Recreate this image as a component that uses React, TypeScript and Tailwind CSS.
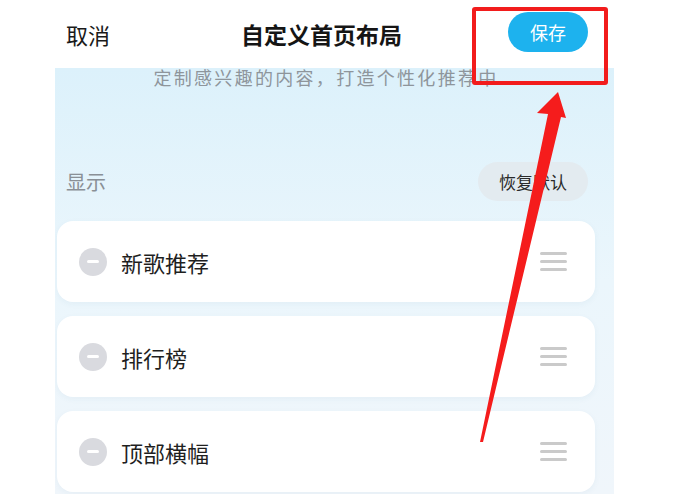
const items = ["新歌推荐", "排行榜", "顶部横幅"];

function DragHandle() {
  return (
    <div className="ml-auto mr-[28px] flex w-[27px] flex-col gap-[5px]">
      <span className="h-[3px] w-full rounded-full bg-[#cacaca]" />
      <span className="h-[3px] w-full rounded-full bg-[#cacaca]" />
      <span className="h-[3px] w-full rounded-full bg-[#cacaca]" />
    </div>
  );
}

function ItemCard({ label }: { label: string }) {
  return (
    <div className="flex h-[81px] items-center rounded-[16px] bg-white shadow-[0_2px_6px_rgba(40,90,140,0.05)]">
      <div className="ml-[22px] flex h-[28px] w-[28px] items-center justify-center rounded-full bg-[#d9dadf]">
        <span className="h-[3px] w-[12px] rounded-full bg-white" />
      </div>
      <span className="ml-[14px] text-[22px] leading-none text-[#1f1f1f]">{label}</span>
      <DragHandle />
    </div>
  );
}

export default function App() {
  return (
    <div
      className="relative flex h-[494px] w-[691px] overflow-hidden bg-white"
      style={{ fontFamily: '"Noto Sans CJK SC", "Noto Sans", sans-serif' }}
    >
      {/* 手机屏幕 */}
      <div className="ml-[55px] flex h-full w-[559px] flex-col">
        {/* 顶部导航 */}
        <header className="flex h-[68px] shrink-0 items-center bg-white">
          <span className="ml-[11px] text-[22px] leading-none text-[#1a1a1a]">取消</span>
          <span className="ml-[131px] text-[23px] font-bold leading-none text-[#151515]">自定义首页布局</span>
          <button className="ml-auto mr-[26px] mt-[-4px] flex h-[40px] w-[80px] items-center justify-center rounded-full bg-[#1db2ee] text-[18px] text-white">
            保存
          </button>
        </header>

        {/* 内容区 */}
        <main className="flex-1 overflow-hidden bg-gradient-to-b from-[#dcf1fb] via-[#ebf6fc] to-[#f0f6fb] pl-[2px] pr-[19px]">
          <p className="mt-[-3px] h-[24px] text-center text-[18px] leading-[24px] tracking-[2.3px] text-[#8e959b]">
            定制感兴趣的内容，打造个性化推荐中
          </p>

          <div className="mt-[73px] flex h-[39px] items-center justify-between pl-[9px] pr-[7px]">
            <span className="text-[20px] leading-none text-[#8a9096]">显示</span>
            <button className="flex h-[39px] w-[110px] items-center justify-center rounded-full bg-[#e3ebf0] text-[17px] text-[#2a2a2a]">
              恢复默认
            </button>
          </div>

          <div className="mt-[20px] flex flex-col gap-[14px]">
            {items.map((label) => (
              <ItemCard key={label} label={label} />
            ))}
          </div>
        </main>
      </div>

      {/* 标注：红框与箭头 */}
      <div className="pointer-events-none absolute left-[472px] top-[7px] h-[78px] w-[136px] rounded-[3px] border-[4px] border-[#f21c1c]" />
      <svg className="pointer-events-none absolute inset-0" width="691" height="494" viewBox="0 0 691 494">
        <polygon
          points="558,92 566,118 561,117 483,442 480,442 548,114 537,113"
          fill="#f51c1c"
        />
      </svg>
    </div>
  );
}
